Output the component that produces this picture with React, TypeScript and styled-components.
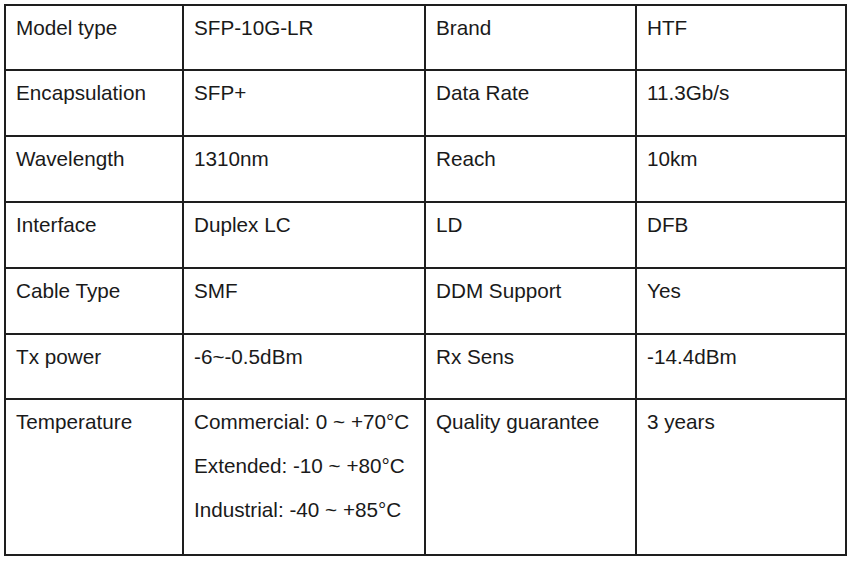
import { createGlobalStyle } from "styled-components"
import styled from "styled-components"

const GlobalStyle = createGlobalStyle`
  html, body {
    margin: 0;
    padding: 0;
    background: #ffffff;
  }
  body {
    font-family: "Liberation Sans", Arial, sans-serif;
    color: #1a1a1a;
  }
`

type Spec = {
  label: string
  value: string[]
  label2: string
  value2: string
}

const specs: Spec[] = [
  { label: "Model type", value: ["SFP-10G-LR"], label2: "Brand", value2: "HTF" },
  { label: "Encapsulation", value: ["SFP+"], label2: "Data Rate", value2: "11.3Gb/s" },
  { label: "Wavelength", value: ["1310nm"], label2: "Reach", value2: "10km" },
  { label: "Interface", value: ["Duplex LC"], label2: "LD", value2: "DFB" },
  { label: "Cable Type", value: ["SMF"], label2: "DDM Support", value2: "Yes" },
  { label: "Tx power", value: ["-6~-0.5dBm"], label2: "Rx Sens", value2: "-14.4dBm" },
  {
    label: "Temperature",
    value: [
      "Commercial: 0 ~ +70°C",
      "Extended: -10 ~ +80°C",
      "Industrial: -40 ~ +85°C",
    ],
    label2: "Quality guarantee",
    value2: "3 years",
  },
]

const App = () => {
  return (
    <>
      <GlobalStyle />
      <Page>
        <Grid>
          {specs.map((row) => (
            <Row key={row.label}>
              <Cell>{row.label}</Cell>
              <Cell>
                {row.value.map((line) => (
                  <Line key={line}>{line}</Line>
                ))}
              </Cell>
              <Cell>{row.label2}</Cell>
              <Cell>{row.value2}</Cell>
            </Row>
          ))}
        </Grid>
      </Page>
    </>
  )
}

export default App

const Page = styled.div`
  width: 850px;
  height: 562px;
  padding: 4px 0 0 4px;
  box-sizing: border-box;
`
const Grid = styled.div`
  display: grid;
  grid-template-columns: 178px 242px 211px 210px;
  grid-template-rows: 65px 66px 66px 66px 66px 65px 156px;
  width: max-content;
  border-top: 2px solid #1e1e1e;
  border-left: 2px solid #1e1e1e;
`
const Row = styled.div`
  display: contents;
`
const Cell = styled.div`
  box-sizing: border-box;
  padding: 0 0 0 10px;
  border-right: 2px solid #1e1e1e;
  border-bottom: 2px solid #1e1e1e;
  font-size: 20.7px;
  line-height: 44px;
  white-space: nowrap;
`
const Line = styled.div`
  line-height: 44px;
`
